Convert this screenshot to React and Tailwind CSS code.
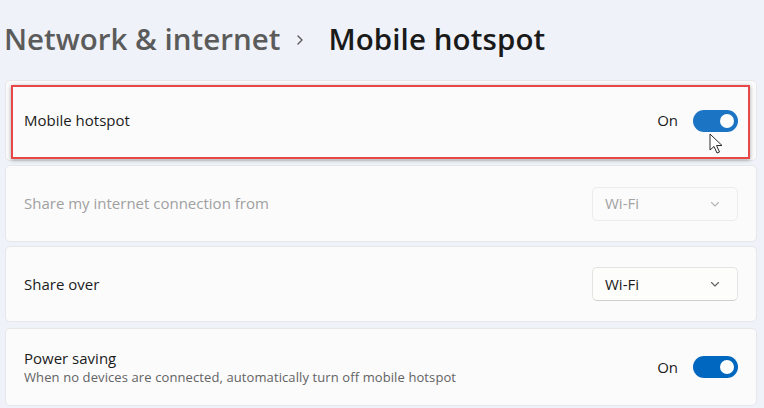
import React from 'react';

const font = { fontFamily: '"Open Sans", "Noto Sans", sans-serif' };

const Toggle = ({ hover }) => (
  <div
    className={`w-[45px] h-[22px] rounded-full flex items-center justify-end pr-[4px] ${
      hover ? 'bg-[#1b74c4]' : 'bg-[#0067c0]'
    }`}
  >
    <div className="w-[14px] h-[14px] rounded-full bg-white" />
  </div>
);

const Chevron = ({ muted }) => (
  <svg width="12" height="12" viewBox="0 0 12 12" fill="none">
    <path
      d="M2.5 4.5 L6 8 L9.5 4.5"
      stroke={muted ? '#b5b5b5' : '#5f5f5f'}
      strokeWidth="1.1"
      strokeLinecap="round"
      strokeLinejoin="round"
    />
  </svg>
);

const Dropdown = ({ disabled }) => (
  <div
    className={`w-[146px] h-[34px] rounded-[5px] border flex items-center justify-between pl-[12px] pr-[16px] text-[15px] ${
      disabled
        ? 'border-[#ececec] bg-[#fbfbfb] text-[#a3a3a3]'
        : 'border-[#e3e3e3] border-b-[#cfcfcf] bg-[#fdfdfb] text-[#1b1b1b]'
    }`}
  >
    <span>Wi-Fi</span>
    <Chevron muted={disabled} />
  </div>
);

// mouse pointer sitting over the first toggle
const Cursor = () => (
  <svg className="absolute left-[703px] top-[52px]" width="16" height="22" viewBox="0 0 16 22">
    <path
      d="M1 1 L1 17 L5 13.5 L8 20 L10.5 19 L7.5 12.5 L13 12.5 Z"
      fill="#ffffff"
      stroke="#2b2b2b"
      strokeWidth="1"
      strokeLinejoin="round"
    />
  </svg>
);

const Card = ({ className = '', children }) => (
  <div
    className={`relative bg-[#fbfbfc] border border-[#e6e7ea] rounded-[5px] flex items-center justify-between pl-[18px] pr-[18px] ${className}`}
  >
    {children}
  </div>
);

export default function App() {
  return (
    <div className="w-[764px] h-[408px] bg-[#eff2f8] overflow-hidden" style={font}>
      <div className="h-[80px] flex items-center pl-[4px] pb-[2px]">
        <span className="text-[29.5px] font-semibold text-[#5b5b5b]">Network &amp; internet</span>
        <svg width="14" height="14" viewBox="0 0 14 14" fill="none" className="mt-[2px] ml-[13px] mr-[21px]">
          <path d="M5 3 L9 7 L5 11" stroke="#5b5b5b" strokeWidth="1.4" strokeLinecap="round" strokeLinejoin="round" />
        </svg>
        <span className="text-[29.5px] font-semibold text-[#1a1a1a] tracking-[0.1px]">Mobile hotspot</span>
      </div>

      <div className="flex flex-col gap-[4px] px-[5px] w-[764px] pr-[7px]">
        <Card className="h-[81px]">
          <span className="text-[15px] text-[#1b1b1b]">Mobile hotspot</span>
          <div className="flex items-center gap-[15px]">
            <span className="text-[15px] text-[#1b1b1b]">On</span>
            <Toggle hover />
          </div>
          <div className="absolute left-[5px] right-[6px] top-[4px] bottom-[1px] border-2 border-[#e8474a] shadow-[0_1px_4px_rgba(0,0,0,0.35)] pointer-events-none" />
          <Cursor />
        </Card>

        <Card className="h-[77px]">
          <span className="text-[15px] text-[#a0a0a0]">Share my internet connection from</span>
          <Dropdown disabled />
        </Card>

        <Card className="h-[76px]">
          <span className="text-[15px] text-[#1b1b1b]">Share over</span>
          <Dropdown />
        </Card>

        <Card className="h-[78px] mt-[2px]">
          <div className="flex flex-col">
            <span className="text-[15px] text-[#1b1b1b] leading-[20px]">Power saving</span>
            <span className="text-[13px] text-[#636363] leading-[18px] tracking-[0.1px]">
              When no devices are connected, automatically turn off mobile hotspot
            </span>
          </div>
          <div className="flex items-center gap-[15px]">
            <span className="text-[15px] text-[#1b1b1b]">On</span>
            <Toggle />
          </div>
        </Card>
      </div>
    </div>
  );
}
